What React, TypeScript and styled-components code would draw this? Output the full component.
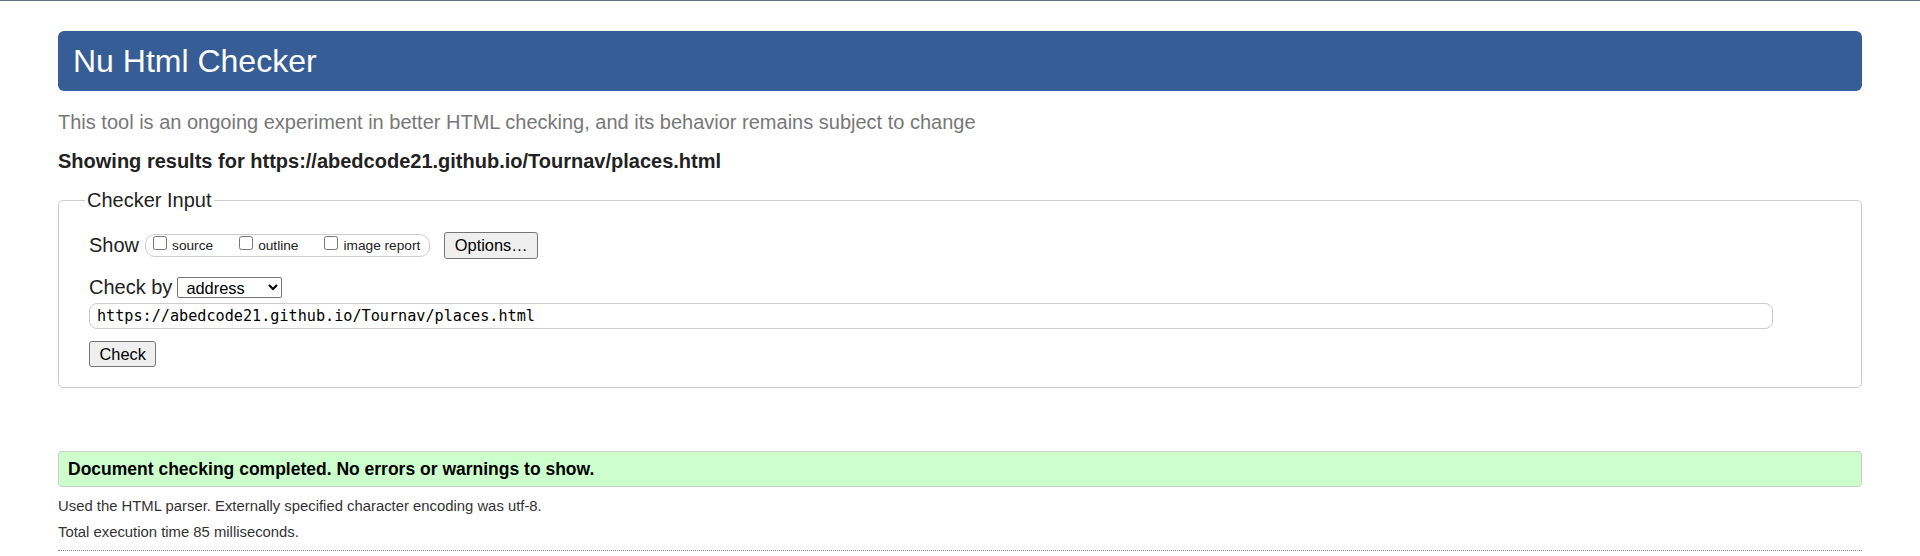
import React from "react";
import styled, { createGlobalStyle } from "styled-components";

const GlobalStyle = createGlobalStyle`
  html, body {
    margin: 0;
    padding: 0;
    background: #fff;
  }
  body {
    border-top: 1px solid #5e7282;
    font-family: "Liberation Sans", Arial, sans-serif;
    font-size: 20px;
    color: #222;
  }
`;

const Page = styled.div`
  padding: 0 58px;
`;

const Title = styled.h1`
  margin: 30px 0 0;
  height: 60px;
  line-height: 60px;
  padding: 0 15px;
  background: #365d95;
  color: #fff;
  font-size: 32px;
  font-weight: normal;
  border-radius: 6px;
`;

const Intro = styled.p`
  margin: 20px 0 0;
  color: #777;
  line-height: 23px;
`;

const Results = styled.p`
  margin: 16px 0 0;
  font-weight: bold;
  line-height: 23px;
`;

const Fieldset = styled.fieldset`
  margin: 16px 0 0;
  padding: 0 30px 20px;
  border: 1px solid #ccc;
  border-radius: 5px;
  min-inline-size: 0;
`;

const Legend = styled.legend`
  padding: 0 2px;
  margin-left: -4px;
  line-height: 23px;
`;

const Row = styled.div<{ $top: number }>`
  display: flex;
  align-items: center;
  margin-top: ${(p) => p.$top}px;
`;

const Label = styled.span`
  line-height: 23px;
`;

const ShowGroup = styled.div`
  display: flex;
  align-items: center;
  gap: 26px;
  height: 21px;
  margin-left: 6px;
  padding: 0 9px 0 7px;
  border: 1px solid #ccc;
  border-radius: 10px;
`;

const Choice = styled.label`
  display: flex;
  align-items: center;
  height: 100%;
  font-size: 13.7px;
  color: #222;
`;

const Box = styled.input`
  width: 14px;
  height: 14px;
  margin: 1px 5px 0 0;
  align-self: flex-start;
`;

const Button = styled.button<{ $h: number }>`
  height: ${(p) => p.$h}px;
  padding: 0 9.5px;
  font-family: "Liberation Sans", Arial, sans-serif;
  font-size: 16.4px;
  color: #000;
  background: #efefef;
  border: 1px solid #767676;
  border-radius: 3px;
`;

const OptionsButton = styled(Button)`
  margin-left: 14px;
`;

const Select = styled.select`
  width: 105px;
  height: 21px;
  margin-left: 5px;
  padding: 0 0 0 4px;
  font-family: "Liberation Sans", Arial, sans-serif;
  font-size: 16.4px;
  color: #000;
  background: #fff;
  border: 1px solid #767676;
  border-radius: 2px;
`;

const UrlInput = styled.input`
  display: block;
  box-sizing: border-box;
  width: 1684px;
  height: 26px;
  margin-top: 4px;
  padding: 0 7px;
  font-family: "DejaVu Sans Mono", "Liberation Mono", monospace;
  font-size: 15.16px;
  color: #000;
  border: 1px solid #ccc;
  border-radius: 8px;
  outline: none;
`;

const CheckRow = styled.div`
  margin-top: 12px;
`;

const Success = styled.div`
  display: flex;
  align-items: center;
  height: 34px;
  margin-top: 63px;
  padding: 0 9px;
  background: #ccffcc;
  border: 1px solid #ccc;
  border-radius: 4px;
  font-size: 17.5px;
  font-weight: bold;
  color: #000;
`;

const Note = styled.p<{ $top: number }>`
  margin: ${(p) => p.$top}px 0 0;
  font-size: 14.85px;
  line-height: 16px;
  color: #333;
`;

const Rule = styled.hr`
  margin: 10px 0 0;
  border: 0;
  border-top: 1px dotted #888;
`;

const url = "https://abedcode21.github.io/Tournav/places.html";

export default function App() {
  return (
    <>
      <GlobalStyle />
      <Page>
        <Title>Nu Html Checker</Title>
        <Intro>
          This tool is an ongoing experiment in better HTML checking, and its
          behavior remains subject to change
        </Intro>
        <Results>Showing results for {url}</Results>
        <Fieldset>
          <Legend>Checker Input</Legend>
          <Row $top={20}>
            <Label>Show</Label>
            <ShowGroup>
              <Choice>
                <Box type="checkbox" />
                source
              </Choice>
              <Choice>
                <Box type="checkbox" />
                outline
              </Choice>
              <Choice>
                <Box type="checkbox" />
                image report
              </Choice>
            </ShowGroup>
            <OptionsButton $h={27}>Options…</OptionsButton>
          </Row>
          <Row $top={17}>
            <Label>Check by</Label>
            <Select defaultValue="address">
              <option value="address">address</option>
              <option value="file">file upload</option>
              <option value="text">text input</option>
            </Select>
          </Row>
          <UrlInput type="url" defaultValue={url} />
          <CheckRow>
            <Button $h={26}>Check</Button>
          </CheckRow>
        </Fieldset>
        <Success>Document checking completed. No errors or warnings to show.</Success>
        <Note $top={11}>
          Used the HTML parser. Externally specified character encoding was utf-8.
        </Note>
        <Note $top={10}>Total execution time 85 milliseconds.</Note>
        <Rule />
      </Page>
    </>
  );
}
